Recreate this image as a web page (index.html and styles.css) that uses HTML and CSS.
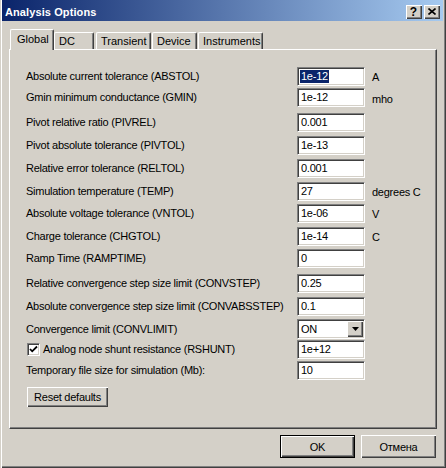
FILE: index.html
```html
<!DOCTYPE html>
<html>
<head>
<meta charset="utf-8">
<link rel="stylesheet" href="styles.css">
</head>
<body>
<div class="window">
  <div class="titlebar">
    <span class="title">Analysis Options</span>
    <div class="caption-btns">
      <div class="cbtn help">?</div>
      <div class="cbtn close">
        <svg width="8" height="7" viewBox="0 0 8 7"><path d="M0.5 0.5 L7.5 6.5 M7.5 0.5 L0.5 6.5" stroke="#000" stroke-width="1.6" fill="none"/></svg>
      </div>
    </div>
  </div>

  <div class="tabs">
    <div class="tab active t-global">Global</div>
    <div class="tab t-dc">DC</div>
    <div class="tab t-transient">Transient</div>
    <div class="tab t-device">Device</div>
    <div class="tab t-instr">Instruments</div>
  </div>

  <div class="panel">
    <div class="row"><span class="label">Absolute current tolerance (ABSTOL)</span><div class="field"><span class="sel">1e-12</span></div><span class="unit">A</span></div>
    <div class="row m2"><span class="label">Gmin minimum conductance (GMIN)</span><div class="field">1e-12</div><span class="unit low">mho</span></div>
    <div class="row m6"><span class="label">Pivot relative ratio (PIVREL)</span><div class="field">0.001</div><span class="unit"></span></div>
    <div class="row m4"><span class="label">Pivot absolute tolerance (PIVTOL)</span><div class="field">1e-13</div><span class="unit"></span></div>
    <div class="row m4"><span class="label">Relative error tolerance (RELTOL)</span><div class="field">0.001</div><span class="unit"></span></div>
    <div class="row m4"><span class="label">Simulation temperature (TEMP)</span><div class="field">27</div><span class="unit">degrees C</span></div>
    <div class="row m3"><span class="label">Absolute voltage tolerance (VNTOL)</span><div class="field">1e-06</div><span class="unit">V</span></div>
    <div class="row m4"><span class="label">Charge tolerance (CHGTOL)</span><div class="field">1e-14</div><span class="unit">C</span></div>
    <div class="row m3"><span class="label">Ramp Time (RAMPTIME)</span><div class="field">0</div><span class="unit"></span></div>
    <div class="row m6"><span class="label">Relative convergence step size limit (CONVSTEP)</span><div class="field">0.25</div><span class="unit"></span></div>
    <div class="row m4"><span class="label">Absolute convergence step size limit (CONVABSSTEP)</span><div class="field">0.1</div><span class="unit"></span></div>
    <div class="row m3"><span class="label">Convergence limit (CONVLIMIT)</span>
      <div class="field combo"><span class="combo-val">ON</span>
        <div class="combo-btn"><svg width="7" height="4" viewBox="0 0 7 4"><path d="M0 0 H7 L3.5 4 Z" fill="#000"/></svg></div>
      </div><span class="unit"></span></div>
    <div class="row m2"><span class="label check-label"><span class="checkbox"><svg width="9" height="9" viewBox="0 0 9 9"><path d="M1 4 L3.2 6.3 L8 1.5" stroke="#000" stroke-width="1.8" fill="none"/></svg></span>Analog node shunt resistance (RSHUNT)</span><div class="field">1e+12</div><span class="unit"></span></div>
    <div class="row m2"><span class="label">Temporary file size for simulation (Mb):</span><div class="field">10</div><span class="unit"></span></div>
    <div class="btn reset">Reset defaults</div>
  </div>

  <div class="footer">
    <div class="btn default"><span class="btn-inner">OK</span></div>
    <div class="btn cancel">Отмена</div>
  </div>
</div>
</body>
</html>
```

FILE: styles.css
```css
* { box-sizing: border-box; }
html, body { margin: 0; padding: 0; }
body {
  background: #d4d0c8;
  font-family: "Liberation Sans", Arial, sans-serif;
  font-size: 11px;
  letter-spacing: -0.25px;
  color: #000;
}
.window {
  width: 446px;
  height: 468px;
  background: #d4d0c8;
  padding: 0 3px 3px 3px;
  box-shadow: inset 1px 0 #d4d0c8, inset 2px 0 #fff, inset -1px -1px #404040, inset -2px -2px #808080;
  display: flex;
  flex-direction: column;
}
.titlebar {
  height: 21px;
  margin: 0 0 0 -1px;
  background: linear-gradient(to right, #0a246a, #a6caf0);
  display: flex;
  align-items: center;
  padding: 2px 3px 0 3px;
}
.title {
  color: #fff;
  font-weight: bold;
  font-size: 11px;
  letter-spacing: 0.1px;
  flex: 1;
}
.caption-btns { display: flex; gap: 2px; }
.cbtn {
  width: 16px;
  height: 14px;
  background: #d4d0c8;
  box-shadow: inset 1px 1px #fff, inset -1px -1px #404040, inset -2px -2px #808080;
  display: flex;
  align-items: center;
  justify-content: center;
  letter-spacing: 0;
}
.help { font-weight: bold; font-size: 12px; line-height: 14px; padding-right: 1px; }
.close svg { display: block; margin-top: -1px; }

.tabs {
  display: flex;
  align-items: flex-end;
  height: 21px;
  margin: 8px 0 -1px 7px;
  position: relative;
  z-index: 1;
  letter-spacing: 0;
}
.tab {
  height: 17px;
  margin-bottom: 1px;
  background: #d4d0c8;
  border-left: 1px solid #fff;
  border-top: 1px solid #fff;
  border-right: 1px solid #404040;
  border-top-left-radius: 2px;
  border-top-right-radius: 2px;
  box-shadow: inset -1px 0 #808080;
  padding-left: 4px;
  display: flex;
  align-items: center;
  white-space: nowrap;
}
.tab.active {
  height: 21px;
  margin-bottom: 0;
  padding-left: 6px;
  padding-bottom: 2px;
}
.t-global { width: 44px; }
.t-dc { width: 40px; }
.t-transient { width: 55px; margin-left: 2px; }
.t-device { width: 45px; margin-left: 1px; }
.t-instr { width: 65px; margin-left: 1px; }

.panel {
  width: 428px;
  height: 380px;
  margin-left: 6px;
  border-top: 1px solid #fff;
  border-left: 1px solid #fff;
  border-right: 1px solid #404040;
  border-bottom: 1px solid #404040;
  box-shadow: inset -1px -1px #808080;
  padding: 17px 0 0 16px;
  display: flex;
  flex-direction: column;
  align-items: flex-start;
}
.row {
  display: grid;
  grid-template-columns: 271px 68px auto;
  align-items: center;
  height: 19px;
}
.m2 { margin-top: 2px; }
.m3 { margin-top: 3px; }
.m4 { margin-top: 4px; }
.m6 { margin-top: 6px; }
.label { white-space: nowrap; margin-top: -1px; }
.unit { padding-left: 7px; }
.unit.low { margin-top: 3px; }
.field {
  height: 19px;
  background: #fff;
  border: 1px solid;
  border-color: #808080 #fff #fff #808080;
  box-shadow: inset 1px 1px #404040, inset -1px -1px #d4d0c8;
  padding: 0 2px 0 3px;
  display: flex;
  align-items: center;
  line-height: 13px;
}
.sel {
  background: #0a246a;
  color: #fff;
  padding: 0 1px;
  margin-left: -1px;
}
.combo { height: 20px; justify-content: space-between; padding-right: 1px; }
.combo-btn {
  width: 16px;
  height: 16px;
  background: #d4d0c8;
  box-shadow: inset 1px 1px #fff, inset -1px -1px #404040, inset -2px -2px #808080;
  display: flex;
  align-items: center;
  justify-content: center;
}
.combo-btn svg { display: block; }
.check-label { display: flex; align-items: center; margin-left: 1px; }
.checkbox {
  width: 13px;
  height: 13px;
  background: #fff;
  border: 1px solid;
  border-color: #808080 #fff #fff #808080;
  box-shadow: inset 1px 1px #404040, inset -1px -1px #d4d0c8;
  display: flex;
  align-items: center;
  justify-content: center;
  margin-right: 3px;
}
.checkbox svg { display: block; }
.btn {
  background: #d4d0c8;
  box-shadow: inset 1px 1px #fff, inset -1px -1px #404040, inset -2px -2px #808080;
  display: flex;
  align-items: center;
  justify-content: center;
  white-space: nowrap;
}
.reset {
  width: 81px;
  height: 20px;
  margin: 7px 0 0 1px;
}
.footer {
  display: flex;
  justify-content: flex-end;
  gap: 6px;
  margin: 6px 7px 0 0;
}
.footer .btn { width: 75px; height: 23px; }
.btn.default {
  border: 1px solid #000;
  box-shadow: none;
  padding: 0;
}
.btn-inner {
  width: 100%;
  height: 100%;
  display: flex;
  align-items: center;
  justify-content: center;
  box-shadow: inset 1px 1px #fff, inset -1px -1px #404040, inset -2px -2px #808080;
}
```
